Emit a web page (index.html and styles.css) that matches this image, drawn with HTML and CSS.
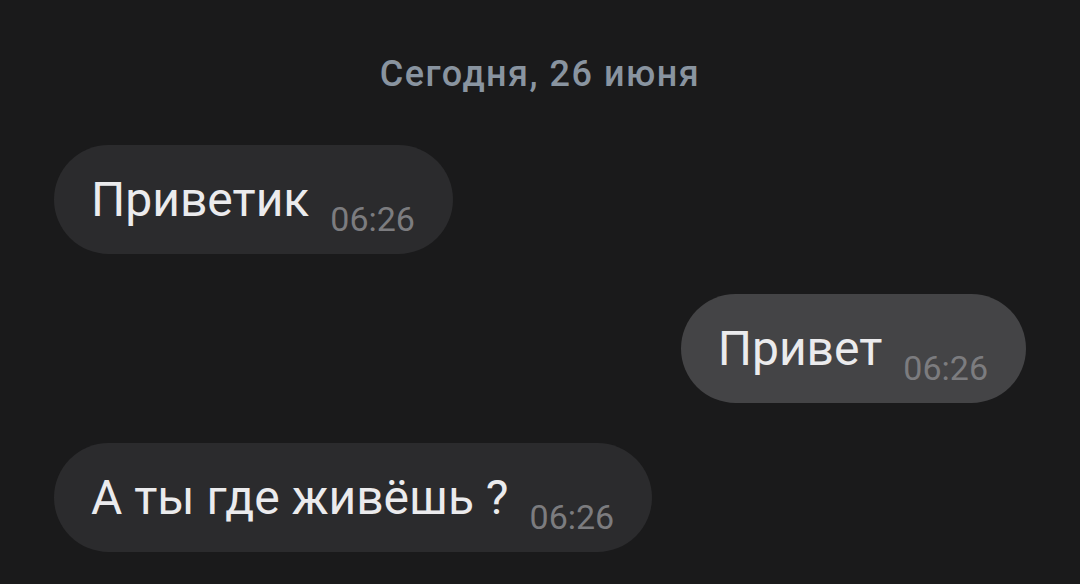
FILE: index.html
```html
<!DOCTYPE html>
<html lang="ru">
<head>
<meta charset="utf-8">
<link rel="stylesheet" href="styles.css">
</head>
<body>
<main class="chat">
  <div class="date">Сегодня, 26 июня</div>
  <div class="row row-in">
    <div class="bubble bubble-in"><span class="text">Приветик</span><span class="time">06:26</span></div>
  </div>
  <div class="row row-out">
    <div class="bubble bubble-out"><span class="text">Привет</span><span class="time">06:26</span></div>
  </div>
  <div class="row row-in">
    <div class="bubble bubble-in"><span class="text">А ты где живёшь ?</span><span class="time">06:26</span></div>
  </div>
</main>
</body>
</html>
```
FILE: styles.css
```css
html, body {
  margin: 0;
  padding: 0;
  background: #1a1a1b;
  height: 100%;
}
body {
  font-family: Roboto, "Noto Sans", sans-serif;
  overflow: hidden;
}
.chat {
  display: flex;
  flex-direction: column;
  padding: 53px 54px 0 54px;
  gap: 40px;
}
.date {
  text-align: center;
  font-size: 36px;
  line-height: 42px;
  font-weight: 500;
  letter-spacing: 1.5px;
  color: #8994a0;
  margin-bottom: 10px;
}
.row {
  display: flex;
}
.row-out {
  justify-content: flex-end;
}
.bubble {
  box-sizing: border-box;
  height: 109px;
  border-radius: 55px;
  padding: 27px 38px 0 37px;
  display: flex;
  align-items: flex-start;
  gap: 21px;
}
.bubble-in {
  background: #2b2b2d;
}
.bubble-out {
  background: #444446;
}
.text {
  font-size: 48px;
  line-height: 56px;
  color: #ebebed;
  white-space: nowrap;
}
.time {
  font-size: 34px;
  line-height: 40px;
  margin-top: 27px;
  color: #7c7c7f;
  white-space: nowrap;
}
```
